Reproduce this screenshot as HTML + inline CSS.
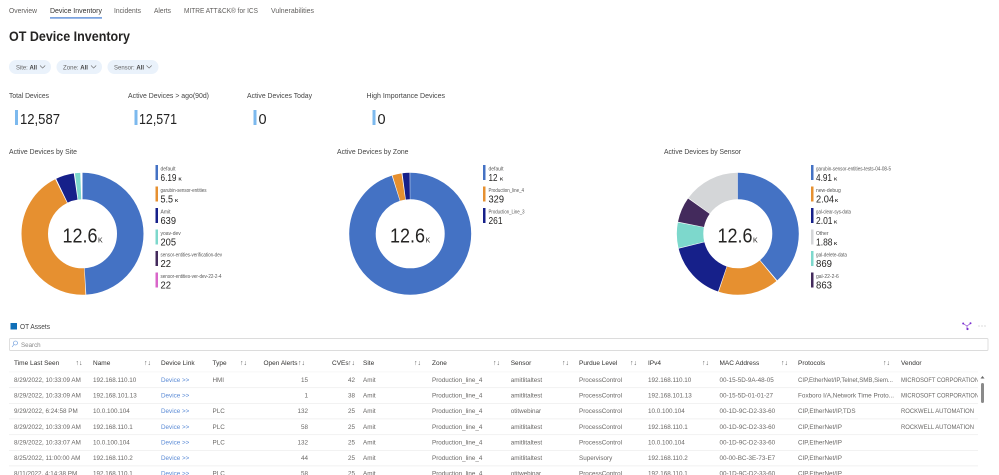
<!DOCTYPE html>
<html lang="en">
<head>
<meta charset="utf-8">
<title>OT Device Inventory</title>
<style>
html,body{margin:0;padding:0;background:#fff;width:999px;height:475px;overflow:hidden}
svg{display:block;filter:blur(.35px)}
text{font-family:"Liberation Sans",sans-serif}
.tab{font-size:7.5px;fill:#605e5c}
.kl{font-size:7.5px;fill:#444}
.kv{font-size:14.5px;fill:#222}
.ct{font-size:7.5px;fill:#444}
.ll{font-size:5px;fill:#555}
.lv{font-size:10px;fill:#252423}
.k{font-size:4.5px;fill:#252423;font-weight:bold}
.c{font-size:20px;fill:#252423}
.ck{font-size:7px;fill:#252423}
.h{font-size:6.5px;fill:#323130}
.r{font-size:6.3px;fill:#6a6866}
.a{font-size:6.3px;fill:#6a6866;text-anchor:end}
.lnk{font-size:6.3px;fill:#5b8bd6}
.ar{font-size:7px;fill:#666}
.p{font-size:6.5px;fill:#666}
.d circle{fill:none;stroke-width:26.5}
</style>
</head>
<body>
<svg width="999" height="475" viewBox="0 0 999 475" xmlns="http://www.w3.org/2000/svg">
<rect width="999" height="475" fill="#fff"/>

<text class="tab" x="9" y="13" textLength="28" lengthAdjust="spacingAndGlyphs">Overview</text>
<text class="tab" x="50" y="13" textLength="52" lengthAdjust="spacingAndGlyphs" style="fill:#323130">Device Inventory</text>
<text class="tab" x="114" y="13" textLength="27" lengthAdjust="spacingAndGlyphs">Incidents</text>
<text class="tab" x="154" y="13" textLength="17" lengthAdjust="spacingAndGlyphs">Alerts</text>
<text class="tab" x="184" y="13" textLength="74" lengthAdjust="spacingAndGlyphs">MITRE ATT&amp;CK® for ICS</text>
<text class="tab" x="271" y="13" textLength="43" lengthAdjust="spacingAndGlyphs">Vulnerabilities</text>
<rect x="50" y="17.2" width="52" height="1.4" fill="#5b8dd9"/>

<text x="9" y="41" font-size="14" font-weight="bold" fill="#252423" textLength="121" lengthAdjust="spacingAndGlyphs">OT Device Inventory</text>

<rect x="9" y="60" width="42" height="14" rx="7" fill="#eaf2fb"/>
<rect x="56.5" y="60" width="45.5" height="14" rx="7" fill="#eaf2fb"/>
<rect x="107.5" y="60" width="51" height="14" rx="7" fill="#eaf2fb"/>
<text class="p" x="16" y="69.5" textLength="21" lengthAdjust="spacingAndGlyphs">Site: <tspan font-weight="bold" fill="#444">All</tspan></text>
<text class="p" x="63" y="69.5" textLength="25" lengthAdjust="spacingAndGlyphs">Zone: <tspan font-weight="bold" fill="#444">All</tspan></text>
<text class="p" x="114" y="69.5" textLength="30" lengthAdjust="spacingAndGlyphs">Sensor: <tspan font-weight="bold" fill="#444">All</tspan></text>
<g fill="none" stroke="#666" stroke-width=".6">
<path d="M40 65.5l2.6 2.6 2.6-2.6"/>
<path d="M91 65.5l2.6 2.6 2.6-2.6"/>
<path d="M146.5 65.5l2.6 2.6 2.6-2.6"/>
</g>

<text class="kl" x="9" y="98" textLength="40" lengthAdjust="spacingAndGlyphs">Total Devices</text>
<text class="kl" x="128" y="98" textLength="81" lengthAdjust="spacingAndGlyphs">Active Devices &gt; ago(90d)</text>
<text class="kl" x="247" y="98" textLength="65" lengthAdjust="spacingAndGlyphs">Active Devices Today</text>
<text class="kl" x="366.5" y="98" textLength="78.5" lengthAdjust="spacingAndGlyphs">High Importance Devices</text>
<g fill="#7cb9ee">
<rect x="15" y="110" width="3" height="15"/>
<rect x="134.5" y="110" width="3" height="15"/>
<rect x="253.5" y="110" width="3" height="15"/>
<rect x="372.5" y="110" width="3" height="15"/>
</g>
<text class="kv" x="20" y="124" textLength="40" lengthAdjust="spacingAndGlyphs">12,587</text>
<text class="kv" x="139" y="124" textLength="38" lengthAdjust="spacingAndGlyphs">12,571</text>
<text class="kv" x="258.5" y="124">0</text>
<text class="kv" x="377.5" y="124">0</text>

<text class="ct" x="9" y="154" textLength="68" lengthAdjust="spacingAndGlyphs">Active Devices by Site</text>
<text class="ct" x="337" y="154" textLength="71.5" lengthAdjust="spacingAndGlyphs">Active Devices by Zone</text>
<text class="ct" x="664" y="154" textLength="77" lengthAdjust="spacingAndGlyphs">Active Devices by Sensor</text>

<!-- Site donut -->
<g class="d" transform="rotate(-90 82.5 233.8)">
<circle cx="82.5" cy="233.8" r="47.75" pathLength="100" stroke="#4472c4" stroke-dasharray="49 51" stroke-dashoffset="0"/>
<circle cx="82.5" cy="233.8" r="47.75" pathLength="100" stroke="#e69030" stroke-dasharray="43.4 56.6" stroke-dashoffset="-49.2"/>
<circle cx="82.5" cy="233.8" r="47.75" pathLength="100" stroke="#16208a" stroke-dasharray="4.8 95.2" stroke-dashoffset="-92.9"/>
<circle cx="82.5" cy="233.8" r="47.75" pathLength="100" stroke="#7dd8cc" stroke-dasharray="1.4 98.6" stroke-dashoffset="-98"/>
</g>
<text class="c" x="62.5" y="242.5" textLength="35" lengthAdjust="spacingAndGlyphs">12.6</text>
<text class="ck" x="98" y="242.5">K</text>

<!-- Zone donut -->
<g class="d" transform="rotate(-90 410.2 233.8)">
<circle cx="410.2" cy="233.8" r="47.75" pathLength="100" stroke="#4472c4" stroke-dasharray="95.1 4.9" stroke-dashoffset="0"/>
<circle cx="410.2" cy="233.8" r="47.75" pathLength="100" stroke="#e69030" stroke-dasharray="2.4 97.6" stroke-dashoffset="-95.3"/>
<circle cx="410.2" cy="233.8" r="47.75" pathLength="100" stroke="#16208a" stroke-dasharray="1.9 98.1" stroke-dashoffset="-97.95"/>
</g>
<text class="c" x="390" y="242.5" textLength="35" lengthAdjust="spacingAndGlyphs">12.6</text>
<text class="ck" x="425.5" y="242.5">K</text>

<!-- Sensor donut -->
<g class="d" transform="rotate(-90 737.8 233.8)">
<circle cx="737.8" cy="233.8" r="47.75" pathLength="100" stroke="#4472c4" stroke-dasharray="38.8 61.2" stroke-dashoffset="0"/>
<circle cx="737.8" cy="233.8" r="47.75" pathLength="100" stroke="#e69030" stroke-dasharray="16 84" stroke-dashoffset="-39.06"/>
<circle cx="737.8" cy="233.8" r="47.75" pathLength="100" stroke="#16208a" stroke-dasharray="15.8 84.2" stroke-dashoffset="-55.26"/>
<circle cx="737.8" cy="233.8" r="47.75" pathLength="100" stroke="#7dd8cc" stroke-dasharray="6.7 93.3" stroke-dashoffset="-71.26"/>
<circle cx="737.8" cy="233.8" r="47.75" pathLength="100" stroke="#432a5c" stroke-dasharray="6.66 93.34" stroke-dashoffset="-78.16"/>
<circle cx="737.8" cy="233.8" r="47.75" pathLength="100" stroke="#d4d6d8" stroke-dasharray="14.9 85.1" stroke-dashoffset="-85.02"/>
</g>
<text class="c" x="717.5" y="242.5" textLength="35" lengthAdjust="spacingAndGlyphs">12.6</text>
<text class="ck" x="753" y="242.5">K</text>

<!-- Legend Site -->
<rect x="155.5" y="165" width="2.5" height="15" fill="#4472c4"/>
<text class="ll" x="160.5" y="170.5">default</text>
<text class="lv" x="160.5" y="181" textLength="16" lengthAdjust="spacingAndGlyphs">6.19</text><text class="k" x="178.5" y="180.5">K</text>
<rect x="155.5" y="186.5" width="2.5" height="15" fill="#e69030"/>
<text class="ll" x="160.5" y="192" textLength="46" lengthAdjust="spacingAndGlyphs">garubin-sensor-entities</text>
<text class="lv" x="160.5" y="202.5" textLength="12.5" lengthAdjust="spacingAndGlyphs">5.5</text><text class="k" x="175" y="202">K</text>
<rect x="155.5" y="208" width="2.5" height="15" fill="#16208a"/>
<text class="ll" x="160.5" y="213.5">Amit</text>
<text class="lv" x="160.5" y="224" textLength="15.5" lengthAdjust="spacingAndGlyphs">639</text>
<rect x="155.5" y="229.5" width="2.5" height="15" fill="#7dd8cc"/>
<text class="ll" x="160.5" y="235">yoav-dev</text>
<text class="lv" x="160.5" y="245.5" textLength="15.5" lengthAdjust="spacingAndGlyphs">205</text>
<rect x="155.5" y="251" width="2.5" height="15" fill="#432a5c"/>
<text class="ll" x="160.5" y="256.5" textLength="61.5" lengthAdjust="spacingAndGlyphs">sensor-entities-verification-dev</text>
<text class="lv" x="160.5" y="267" textLength="10.5" lengthAdjust="spacingAndGlyphs">22</text>
<rect x="155.5" y="272.5" width="2.5" height="15" fill="#d966c9"/>
<text class="ll" x="160.5" y="278" textLength="61" lengthAdjust="spacingAndGlyphs">sensor-entities-ver-dev-22-2-4</text>
<text class="lv" x="160.5" y="288.5" textLength="10.5" lengthAdjust="spacingAndGlyphs">22</text>

<!-- Legend Zone -->
<rect x="483" y="165" width="2.5" height="15" fill="#4472c4"/>
<text class="ll" x="488.5" y="170.5">default</text>
<text class="lv" x="488.5" y="181" textLength="9" lengthAdjust="spacingAndGlyphs">12</text><text class="k" x="500" y="180.5">K</text>
<rect x="483" y="186.5" width="2.5" height="15" fill="#e69030"/>
<text class="ll" x="488.5" y="192" textLength="35.5" lengthAdjust="spacingAndGlyphs">Production_line_4</text>
<text class="lv" x="488.5" y="202.5" textLength="15.5" lengthAdjust="spacingAndGlyphs">329</text>
<rect x="483" y="208" width="2.5" height="15" fill="#16208a"/>
<text class="ll" x="488.5" y="213.5" textLength="36" lengthAdjust="spacingAndGlyphs">Production_Line_3</text>
<text class="lv" x="488.5" y="224" textLength="14" lengthAdjust="spacingAndGlyphs">261</text>

<!-- Legend Sensor -->
<rect x="811" y="165" width="2.5" height="15" fill="#4472c4"/>
<text class="ll" x="816" y="170.5" textLength="75" lengthAdjust="spacingAndGlyphs">garubin-sensor-entities-tests-04-08-5</text>
<text class="lv" x="816" y="181" textLength="16" lengthAdjust="spacingAndGlyphs">4.91</text><text class="k" x="834" y="180.5">K</text>
<rect x="811" y="186.5" width="2.5" height="15" fill="#e69030"/>
<text class="ll" x="816" y="192">new-debug</text>
<text class="lv" x="816" y="202.5" textLength="18" lengthAdjust="spacingAndGlyphs">2.04</text><text class="k" x="835" y="202">K</text>
<rect x="811" y="208" width="2.5" height="15" fill="#16208a"/>
<text class="ll" x="816" y="213.5" textLength="35" lengthAdjust="spacingAndGlyphs">gal-clear-sys-data</text>
<text class="lv" x="816" y="224" textLength="16.5" lengthAdjust="spacingAndGlyphs">2.01</text><text class="k" x="834" y="223.5">K</text>
<rect x="811" y="229.5" width="2.5" height="15" fill="#d4d6d8"/>
<text class="ll" x="816" y="235">Other</text>
<text class="lv" x="816" y="245.5" textLength="16.5" lengthAdjust="spacingAndGlyphs">1.88</text><text class="k" x="834" y="245">K</text>
<rect x="811" y="251" width="2.5" height="15" fill="#7dd8cc"/>
<text class="ll" x="816" y="256.5" textLength="31" lengthAdjust="spacingAndGlyphs">gal-delete-data</text>
<text class="lv" x="816" y="267" textLength="16" lengthAdjust="spacingAndGlyphs">869</text>
<rect x="811" y="272.5" width="2.5" height="15" fill="#432a5c"/>
<text class="ll" x="816" y="278">gal-22-2-6</text>
<text class="lv" x="816" y="288.5" textLength="16" lengthAdjust="spacingAndGlyphs">863</text>

<!-- OT Assets -->
<rect x="10.5" y="323" width="6.5" height="6.5" fill="#0f6fb8"/>
<text x="20" y="329" font-size="7.5" fill="#444" textLength="30" lengthAdjust="spacingAndGlyphs">OT Assets</text>
<g fill="none" stroke="#8a3fd1" stroke-width=".7">
<path d="M963 323.5l4 2.5 3.500-2.500M967 326v3"/>
</g>
<g fill="#7a2fd0">
<circle cx="963.2" cy="323.5" r="1"/><circle cx="970.5" cy="323.3" r="1"/><circle cx="967.5" cy="329" r="1.1"/>
</g>
<g fill="#aaa"><circle cx="979" cy="326" r=".55"/><circle cx="982" cy="326" r=".55"/><circle cx="985" cy="326" r=".55"/></g>

<rect x="9.5" y="338.5" width="978.5" height="12" rx="1" fill="#fff" stroke="#dcdcdc" stroke-width=".9"/>
<g fill="none" stroke="#5a8fd8" stroke-width=".6"><circle cx="15.500" cy="343" r="2"/><path d="M14 344.5l-2 2.5"/></g>
<text x="21" y="346.8" font-size="6.2" fill="#888">Search</text>

<!-- header -->
<g class="h">
<text x="14" y="365">Time Last Seen</text>
<text x="93" y="365">Name</text>
<text x="161" y="365">Device Link</text>
<text x="212.5" y="365">Type</text>
<text x="263.5" y="365">Open Alerts</text>
<text x="332" y="365">CVEs</text>
<text x="363" y="365">Site</text>
<text x="432" y="365">Zone</text>
<text x="510.7" y="365">Sensor</text>
<text x="579" y="365">Purdue Level</text>
<text x="648" y="365">IPv4</text>
<text x="719.5" y="365">MAC Address</text>
<text x="798" y="365">Protocols</text>
<text x="901" y="365">Vendor</text>
</g>
<g class="ar">
<text x="75.5" y="365">↑↓</text>
<text x="144" y="365">↑↓</text>
<text x="240" y="365">↑↓</text>
<text x="298" y="365">↑↓</text>
<text x="348" y="365">↑↓</text>
<text x="414" y="365">↑↓</text>
<text x="493" y="365">↑↓</text>
<text x="562" y="365">↑↓</text>
<text x="630" y="365">↑↓</text>
<text x="702" y="365">↑↓</text>
<text x="781" y="365">↑↓</text>
<text x="883" y="365">↑↓</text>
</g>

<g fill="#eeeeee">
<rect x="9" y="371.5" width="969" height=".8" fill="#f5f5f5"/>
<rect x="9" y="387.3" width="969" height=".8"/>
<rect x="9" y="403" width="969" height=".8"/>
<rect x="9" y="418.5" width="969" height=".8"/>
<rect x="9" y="434.3" width="969" height=".8"/>
<rect x="9" y="450" width="969" height=".8"/>
<rect x="9" y="465.5" width="969" height=".8"/>
</g>

<!-- row 1 -->
<g>
<text class="r" x="14" y="382">8/29/2022, 10:33:09 AM</text><text class="r" x="93" y="382">192.168.110.10</text><text class="lnk" x="161" y="382">Device &gt;&gt;</text><text class="r" x="212.5" y="382">HMI</text><text class="a" x="308" y="382">15</text><text class="a" x="355" y="382">42</text><text class="r" x="363" y="382">Amit</text><text class="r" x="432" y="382">Production_line_4</text><text class="r" x="510.7" y="382">amitlitaltest</text><text class="r" x="579" y="382">ProcessControl</text><text class="r" x="648" y="382">192.168.110.10</text><text class="r" x="719.5" y="382">00-15-5D-9A-48-05</text><text class="r" x="798" y="382" textLength="95" lengthAdjust="spacingAndGlyphs">CIP,EtherNet/IP,Telnet,SMB,Siem...</text><text class="r" x="901" y="382" textLength="78" lengthAdjust="spacingAndGlyphs">MICROSOFT CORPORATION</text>
</g>
<!-- row 2 -->
<g>
<text class="r" x="14" y="397.7">8/29/2022, 10:33:09 AM</text><text class="r" x="93" y="397.7">192.168.101.13</text><text class="lnk" x="161" y="397.7">Device &gt;&gt;</text><text class="a" x="308" y="397.7">1</text><text class="a" x="355" y="397.7">38</text><text class="r" x="363" y="397.7">Amit</text><text class="r" x="432" y="397.7">Production_line_4</text><text class="r" x="510.7" y="397.7">amitlitaltest</text><text class="r" x="579" y="397.7">ProcessControl</text><text class="r" x="648" y="397.7">192.168.101.13</text><text class="r" x="719.5" y="397.7">00-15-5D-01-01-27</text><text class="r" x="798" y="397.7" textLength="96" lengthAdjust="spacingAndGlyphs">Foxboro I/A,Network Time Proto...</text><text class="r" x="901" y="397.7" textLength="78" lengthAdjust="spacingAndGlyphs">MICROSOFT CORPORATION</text>
</g>
<!-- row 3 -->
<g>
<text class="r" x="14" y="413">9/29/2022, 6:24:58 PM</text><text class="r" x="93" y="413">10.0.100.104</text><text class="lnk" x="161" y="413">Device &gt;&gt;</text><text class="r" x="212.5" y="413">PLC</text><text class="a" x="308" y="413">132</text><text class="a" x="355" y="413">25</text><text class="r" x="363" y="413">Amit</text><text class="r" x="432" y="413">Production_line_4</text><text class="r" x="510.7" y="413">otitwebinar</text><text class="r" x="579" y="413">ProcessControl</text><text class="r" x="648" y="413">10.0.100.104</text><text class="r" x="719.5" y="413">00-1D-9C-D2-33-60</text><text class="r" x="798" y="413">CIP,EtherNet/IP,TDS</text><text class="r" x="901" y="413" textLength="73" lengthAdjust="spacingAndGlyphs">ROCKWELL AUTOMATION</text>
</g>
<!-- row 4 -->
<g>
<text class="r" x="14" y="429">8/29/2022, 10:33:09 AM</text><text class="r" x="93" y="429">192.168.110.1</text><text class="lnk" x="161" y="429">Device &gt;&gt;</text><text class="r" x="212.5" y="429">PLC</text><text class="a" x="308" y="429">58</text><text class="a" x="355" y="429">25</text><text class="r" x="363" y="429">Amit</text><text class="r" x="432" y="429">Production_line_4</text><text class="r" x="510.7" y="429">amitlitaltest</text><text class="r" x="579" y="429">ProcessControl</text><text class="r" x="648" y="429">192.168.110.1</text><text class="r" x="719.5" y="429">00-1D-9C-D2-33-60</text><text class="r" x="798" y="429">CIP,EtherNet/IP</text><text class="r" x="901" y="429" textLength="73" lengthAdjust="spacingAndGlyphs">ROCKWELL AUTOMATION</text>
</g>
<!-- row 5 -->
<g>
<text class="r" x="14" y="444.5">8/29/2022, 10:33:07 AM</text><text class="r" x="93" y="444.5">10.0.100.104</text><text class="lnk" x="161" y="444.5">Device &gt;&gt;</text><text class="r" x="212.5" y="444.5">PLC</text><text class="a" x="308" y="444.5">132</text><text class="a" x="355" y="444.5">25</text><text class="r" x="363" y="444.5">Amit</text><text class="r" x="432" y="444.5">Production_line_4</text><text class="r" x="510.7" y="444.5">amitlitaltest</text><text class="r" x="579" y="444.5">ProcessControl</text><text class="r" x="648" y="444.5">10.0.100.104</text><text class="r" x="719.5" y="444.5">00-1D-9C-D2-33-60</text><text class="r" x="798" y="444.5">CIP,EtherNet/IP</text>
</g>
<!-- row 6 -->
<g>
<text class="r" x="14" y="460">8/25/2022, 11:00:00 AM</text><text class="r" x="93" y="460">192.168.110.2</text><text class="lnk" x="161" y="460">Device &gt;&gt;</text><text class="a" x="308" y="460">44</text><text class="a" x="355" y="460">25</text><text class="r" x="363" y="460">Amit</text><text class="r" x="432" y="460">Production_line_4</text><text class="r" x="510.7" y="460">amitlitaltest</text><text class="r" x="579" y="460">Supervisory</text><text class="r" x="648" y="460">192.168.110.2</text><text class="r" x="719.5" y="460">00-00-BC-3E-73-E7</text><text class="r" x="798" y="460">CIP,EtherNet/IP</text>
</g>
<!-- row 7 -->
<g>
<text class="r" x="14" y="475.5">8/11/2022, 4:14:38 PM</text><text class="r" x="93" y="475.5">192.168.110.1</text><text class="lnk" x="161" y="475.5">Device &gt;&gt;</text><text class="r" x="212.5" y="475.5">PLC</text><text class="a" x="308" y="475.5">58</text><text class="a" x="355" y="475.5">25</text><text class="r" x="363" y="475.5">Amit</text><text class="r" x="432" y="475.5">Production_line_4</text><text class="r" x="510.7" y="475.5">otitwebinar</text><text class="r" x="579" y="475.5">ProcessControl</text><text class="r" x="648" y="475.5">192.168.110.1</text><text class="r" x="719.5" y="475.5">00-1D-9C-D2-33-60</text><text class="r" x="798" y="475.5">CIP,EtherNet/IP</text>
</g>

<!-- scrollbar -->
<rect x="978" y="372" width="9" height="103" fill="#fff"/>
<path d="M980.5 378.5l2-2.5 2 2.5z" fill="#666"/>
<rect x="981" y="383" width="3" height="20" rx="1.5" fill="#8a8a8a"/>
</svg>
</body>
</html>
